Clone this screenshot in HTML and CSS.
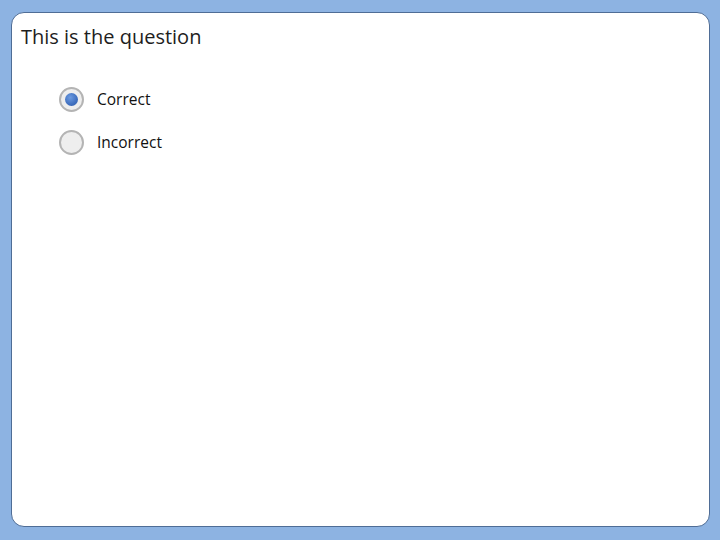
FILE: index.html
```html
<!DOCTYPE html>
<html>
<head>
<meta charset="utf-8">
<link rel="stylesheet" href="styles.css">
</head>
<body>
<div class="card">
  <h1 class="question">This is the question</h1>
  <div class="options">
    <label class="option">
      <span class="radio checked"><span class="dot"></span></span>
      <span class="label">Correct</span>
    </label>
    <label class="option">
      <span class="radio"></span>
      <span class="label">Incorrect</span>
    </label>
  </div>
</div>
</body>
</html>
```
FILE: styles.css
```css
html, body {
  margin: 0;
  padding: 0;
}
body {
  background: #8db3e2;
  width: 720px;
  height: 540px;
  padding: 12px 10px 13px 11px;
  box-sizing: border-box;
  font-family: "Open Sans", "Noto Sans", sans-serif;
}
.card {
  box-sizing: border-box;
  height: 100%;
  background: #ffffff;
  border: 1px solid #4f6d96;
  border-radius: 13px;
  padding: 10px 9px;
}
.question {
  margin: 0;
  font-weight: normal;
  font-size: 20px;
  line-height: 28px;
  color: #1e1e1e;
}
.options {
  display: flex;
  flex-direction: column;
  gap: 19px;
  padding: 36px 0 0 38px;
}
.option {
  display: flex;
  align-items: center;
  gap: 13px;
  height: 24px;
}
.radio {
  box-sizing: border-box;
  width: 25px;
  height: 25px;
  border-radius: 50%;
  border: 2px solid #b4b4b4;
  background: #eeeeee;
  display: flex;
  align-items: center;
  justify-content: center;
}
.dot {
  width: 13px;
  height: 13px;
  border-radius: 50%;
  background: radial-gradient(circle at 40% 35%, #6d9be0 0%, #3f6fbf 60%, #2e5aa6 100%);
}
.label {
  font-size: 15.5px;
  color: #111;
}
```
